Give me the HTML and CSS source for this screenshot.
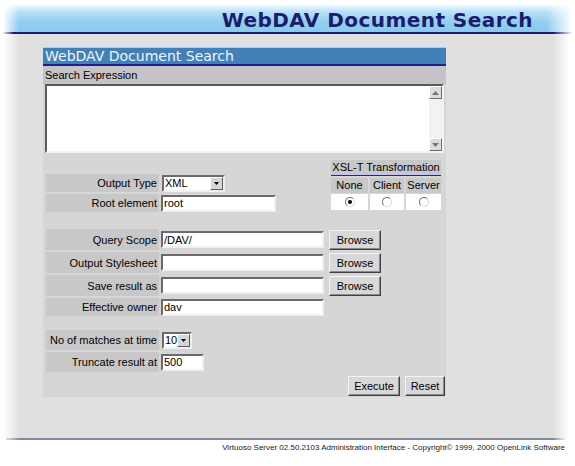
FILE: index.html
```html
<!DOCTYPE html>
<html>
<head>
<meta charset="utf-8">
<link rel="stylesheet" href="styles.css">
</head>
<body>
<div class="page">
  <header class="banner"><h1>WebDAV Document Search</h1></header>
  <main class="main">
    <div class="panel">
      <div class="panel-title">WebDAV Document Search</div>
      <div class="section-label">Search Expression</div>
      <div class="textarea">
        <div class="ta-body"></div>
        <div class="scroll">
          <span class="sbtn"><svg width="7" height="4" viewBox="0 0 7 4"><path d="M3.5 0 L7 4 L0 4 Z" fill="#777"/></svg></span>
          <span class="track"></span>
          <span class="sbtn"><svg width="7" height="4" viewBox="0 0 7 4"><path d="M0 0 L7 0 L3.5 4 Z" fill="#777"/></svg></span>
        </div>
      </div>

      <div class="block1">
        <div class="col">
          <div class="row">
            <div class="lbl">Output Type</div>
            <div class="select sel-xml"><span class="val">XML</span><span class="drop"><svg width="5" height="3" viewBox="0 0 5 3"><path d="M0 0 L5 0 L2.5 3 Z" fill="#000"/></svg></span></div>
          </div>
          <div class="row">
            <div class="lbl">Root element</div>
            <input class="inp w-root" type="text" value="root">
          </div>
        </div>
        <div class="xsl">
          <div class="xsl-head">XSL-T Transformation</div>
          <div class="xsl-grid">
            <div class="xcell">None</div>
            <div class="xcell">Client</div>
            <div class="xcell">Server</div>
            <div class="rcell"><span class="radio on"></span></div>
            <div class="rcell"><span class="radio"></span></div>
            <div class="rcell"><span class="radio"></span></div>
          </div>
        </div>
      </div>

      <div class="block2">
        <div class="row tall">
          <div class="lbl">Query Scope</div>
          <input class="inp w-long" type="text" value="/DAV/">
          <button class="btn b-browse">Browse</button>
        </div>
        <div class="row tall">
          <div class="lbl">Output Stylesheet</div>
          <input class="inp w-long" type="text" value="">
          <button class="btn b-browse">Browse</button>
        </div>
        <div class="row tall">
          <div class="lbl">Save result as</div>
          <input class="inp w-long" type="text" value="">
          <button class="btn b-browse">Browse</button>
        </div>
        <div class="row">
          <div class="lbl">Effective owner</div>
          <input class="inp w-long" type="text" value="dav">
        </div>
      </div>

      <div class="block3">
        <div class="row mid">
          <div class="lbl">No of matches at time</div>
          <div class="select sel-num"><span class="val">10</span><span class="drop"><svg width="5" height="3" viewBox="0 0 5 3"><path d="M0 0 L5 0 L2.5 3 Z" fill="#000"/></svg></span></div>
        </div>
        <div class="row mid">
          <div class="lbl">Truncate result at</div>
          <input class="inp w-short" type="text" value="500">
        </div>
      </div>

      <div class="actions">
        <button class="btn b-exec">Execute</button>
        <button class="btn b-reset">Reset</button>
      </div>
    </div>
  </main>
  <div class="rule"></div>
  <footer class="footer">Virtuoso Server 02.50.2103 Administration Interface - Copyright© 1999, 2000 OpenLink Software</footer>
</div>
</body>
</html>
```
FILE: styles.css
```css
body {
  margin: 0;
  background: #fff;
  font-family: "Liberation Sans", Arial, sans-serif;
  font-size: 11px;
  color: #000;
}
.page {
  width: 575px;
  height: 466px;
  overflow: hidden;
}
.banner {
  margin: 5px 3px 0 3px;
  height: 27px;
  border-bottom: 2px solid #1b1b6b;
  border-image: linear-gradient(to right, rgba(27,27,107,0) 0, #1b1b6b 12px, #1b1b6b calc(100% - 20px), rgba(27,27,107,0) 100%) 1;
  background:
    linear-gradient(to right, #fff 0, rgba(255,255,255,0) 16px, rgba(255,255,255,0) calc(100% - 26px), #fff 100%),
    linear-gradient(to bottom, #f2f9fd 0, #b8e0f6 7px, #95cff0 16px, #89c9ee 100%);
  display: flex;
  justify-content: flex-end;
  align-items: flex-end;
  padding-right: 39px;
}
.banner h1 {
  margin: 0;
  font: bold 20px/24px "DejaVu Sans", Verdana, sans-serif;
  letter-spacing: 0.45px;
  color: #1c1c6e;
}
.main {
  height: 391px;
  padding: 13px 0 0 43px;
  background:
    linear-gradient(to right, #fff 3px, rgba(255,255,255,0) 20px, rgba(255,255,255,0) calc(100% - 22px), #fff calc(100% - 6px)),
    #e0e0e0;
}
.rule {
  height: 2px;
  margin: 0 8px 0 6px;
  background: linear-gradient(to right, rgba(130,138,156,0.3) 0, #838a9c 14px, #838a9c calc(100% - 14px), rgba(130,138,156,0) 100%);
}
.footer {
  text-align: right;
  padding-right: 10px;
  margin-top: 3px;
  font-size: 8px;
  line-height: 10px;
  color: #1a1a1a;
}
.panel {
  width: 403px;
  background: #d6d6d6;
  padding-bottom: 1px;
}
.panel-title {
  height: 16px;
  border-top: 1px solid #a9cde6;
  border-bottom: 2px solid #1e1e8e;
  background: #4181b8;
  color: #f0f5fb;
  font: 14px/16px "DejaVu Sans", Verdana, sans-serif;
  padding-left: 2px;
}
.section-label {
  height: 18px;
  line-height: 19px;
  background: #c5c3c8;
  padding-left: 2px;
}
.textarea {
  margin: 0 2px;
  height: 65px;
  display: flex;
  background: #fff;
  border: 2px solid;
  border-color: #5a5a5a #f4f4f4 #f4f4f4 #5a5a5a;
}
.ta-body {
  flex: 1;
}
.scroll {
  width: 13px;
  display: flex;
  flex-direction: column;
  background: #f2f2f2;
}
.sbtn {
  height: 13px;
  box-sizing: border-box;
  background: #dcdcdc;
  border: 1px solid;
  border-color: #fff #6e6e6e #6e6e6e #fff;
  display: flex;
  align-items: center;
  justify-content: center;
}
.track {
  flex: 1;
}
.block1 {
  margin-top: 7px;
  display: flex;
}
.col {
  margin-left: 3px;
  padding-top: 14px;
  display: flex;
  flex-direction: column;
  gap: 2px;
}
.row {
  display: flex;
  align-items: center;
  gap: 2px;
  height: 18px;
}
.row.tall {
  height: 21px;
}
.row.mid {
  height: 20px;
}
.lbl {
  width: 111px;
  height: 100%;
  background: #c8c8c8;
  text-align: right;
  padding-right: 2px;
  display: flex;
  align-items: center;
  justify-content: flex-end;
  white-space: nowrap;
}
.inp {
  box-sizing: border-box;
  height: 17px;
  margin: 0;
  padding: 0 0 0 1px;
  font: 11px "Liberation Sans", Arial, sans-serif;
  color: #000;
  background: #fff;
  border: 2px solid;
  border-color: #6a6a6a #f0f0f0 #f0f0f0 #6a6a6a;
  outline: none;
}
.w-root { width: 115px; }
.w-long { width: 163px; }
.w-short { width: 43px; }
.select {
  box-sizing: border-box;
  height: 17px;
  margin-left: 1px;
  display: flex;
  background: #fff;
  border: 2px solid;
  border-color: #6a6a6a #f0f0f0 #f0f0f0 #6a6a6a;
}
.sel-xml { width: 63px; }
.sel-num { width: 30px; }
.select .val {
  flex: 1;
  padding-left: 1px;
  line-height: 13px;
}
.select .drop {
  width: 13px;
  box-sizing: border-box;
  background: #d6d6d6;
  border: 1px solid;
  border-color: #fff #5a5a5a #5a5a5a #fff;
  display: flex;
  align-items: center;
  justify-content: center;
}
.xsl {
  margin-left: auto;
  margin-right: 5px;
  width: 110px;
}
.xsl-head {
  height: 15px;
  line-height: 15px;
  background: #c8c8c8;
  border-bottom: 1px solid #25258a;
  text-align: center;
}
.xsl-grid {
  margin-top: 2px;
  display: grid;
  grid-template-columns: 37px 34px 35px;
  grid-template-rows: 15px 16px;
  column-gap: 2px;
  row-gap: 1px;
}
.xcell {
  background: #c8c8c8;
  text-align: center;
  line-height: 15px;
}
.rcell {
  background: #fff;
  display: flex;
  align-items: center;
  justify-content: center;
}
.radio {
  width: 10px;
  height: 10px;
  box-sizing: border-box;
  border-radius: 50%;
  border: 1px solid;
  border-color: #6e6e6e #d8d8d8 #d8d8d8 #6e6e6e;
  background: #fff;
  display: flex;
  align-items: center;
  justify-content: center;
}
.radio.on::after {
  content: "";
  width: 4px;
  height: 4px;
  border-radius: 50%;
  background: #000;
}
.block2 {
  margin-top: 17px;
  margin-left: 3px;
  display: flex;
  flex-direction: column;
  gap: 2px;
}
.btn {
  box-sizing: border-box;
  height: 20px;
  margin: 0;
  padding: 0;
  font: 11px "Liberation Sans", Arial, sans-serif;
  color: #000;
  background: #d8d8d8;
  border: 1px solid;
  border-color: #f4f4f4 #404040 #404040 #f4f4f4;
  box-shadow: inset -1px -1px 0 #8a8a8a;
}
.b-browse {
  width: 52px;
  margin-left: 3px;
}
.block3 {
  margin-top: 14px;
  margin-left: 3px;
  display: flex;
  flex-direction: column;
  gap: 2px;
}
.actions {
  margin-top: 4px;
  display: flex;
  justify-content: flex-end;
  gap: 5px;
  padding-right: 1px;
}
.b-exec { width: 52px; }
.b-reset { width: 40px; }
```
